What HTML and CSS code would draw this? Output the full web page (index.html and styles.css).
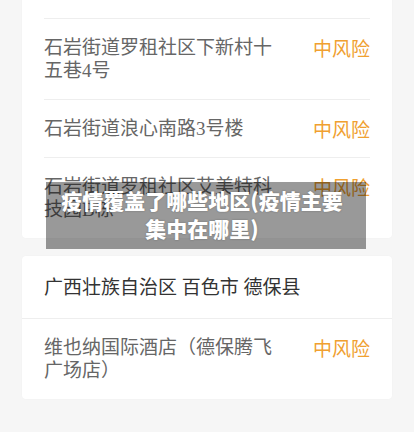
FILE: index.html
```html
<!DOCTYPE html>
<html lang="zh-CN">
<head>
    <meta charset="UTF-8">
    <meta name="viewport" content="width=device-width, initial-scale=1.0">
    <title>疫情覆盖了哪些地区</title>
    <link rel="stylesheet" href="styles.css">
</head>
<body>
    <div class="page">
        <div class="card card-top">
            <div class="row">
                <span class="place">石岩街道罗租社区下新村十五巷4号</span>
                <span class="risk">中风险</span>
            </div>
            <div class="row">
                <span class="place">石岩街道浪心南路3号楼</span>
                <span class="risk">中风险</span>
            </div>
            <div class="row">
                <span class="place">石岩街道罗租社区艾美特科技园B栋</span>
                <span class="risk">中风险</span>
            </div>
        </div>

        <div class="card">
            <div class="area">广西壮族自治区 百色市 德保县</div>
            <div class="row row-wide">
                <span class="place">维也纳国际酒店（德保腾飞广场店）</span>
                <span class="risk">中风险</span>
            </div>
        </div>

        <div class="banner">
            <p class="banner-title">疫情覆盖了哪些地区(疫情主要集中在哪里)</p>
        </div>
    </div>
</body>
</html>
```

FILE: styles.css
```css
body { margin: 0; background: #f6f6f6; font-family: "Liberation Serif", "Noto Sans CJK SC", serif; }
.page { position: relative; padding: 0 22px; height: 432px; overflow: hidden; }
.card { background: #fff; border-radius: 4px; margin-top: 18px; box-shadow: 0 0 2px rgba(0,0,0,0.03); }
.card-top { margin-top: -8px; padding-top: 26px; }
.row { display: flex; justify-content: space-between; align-items: flex-start; gap: 30px; margin: 0 22px; padding: 17px 0; border-top: 1px solid #eeeeee; }
.row-wide { border-top: none; }
.place { flex: 1; font-size: 19px; line-height: 23px; color: #666; }
.risk { font-size: 19px; line-height: 23px; color: #f0a030; white-space: nowrap; font-family: "Noto Sans CJK SC", sans-serif; }
.area { padding: 20px 22px 19px; font-size: 19px; line-height: 23px; color: #333; border-bottom: 1px solid #eeeeee; }
.banner { position: absolute; left: 46px; top: 182px; width: 320px; height: 67px; display: flex; justify-content: center; background: rgba(0,0,0,0.4); }
.banner-title { margin: 4px 8px 0 0; width: 290px; color: #fff; font-family: "Noto Sans CJK SC", sans-serif; font-weight: 900; font-size: 21px; line-height: 28px; text-align: center; text-shadow: 0 0 2px rgba(0,0,0,0.3); }
```
